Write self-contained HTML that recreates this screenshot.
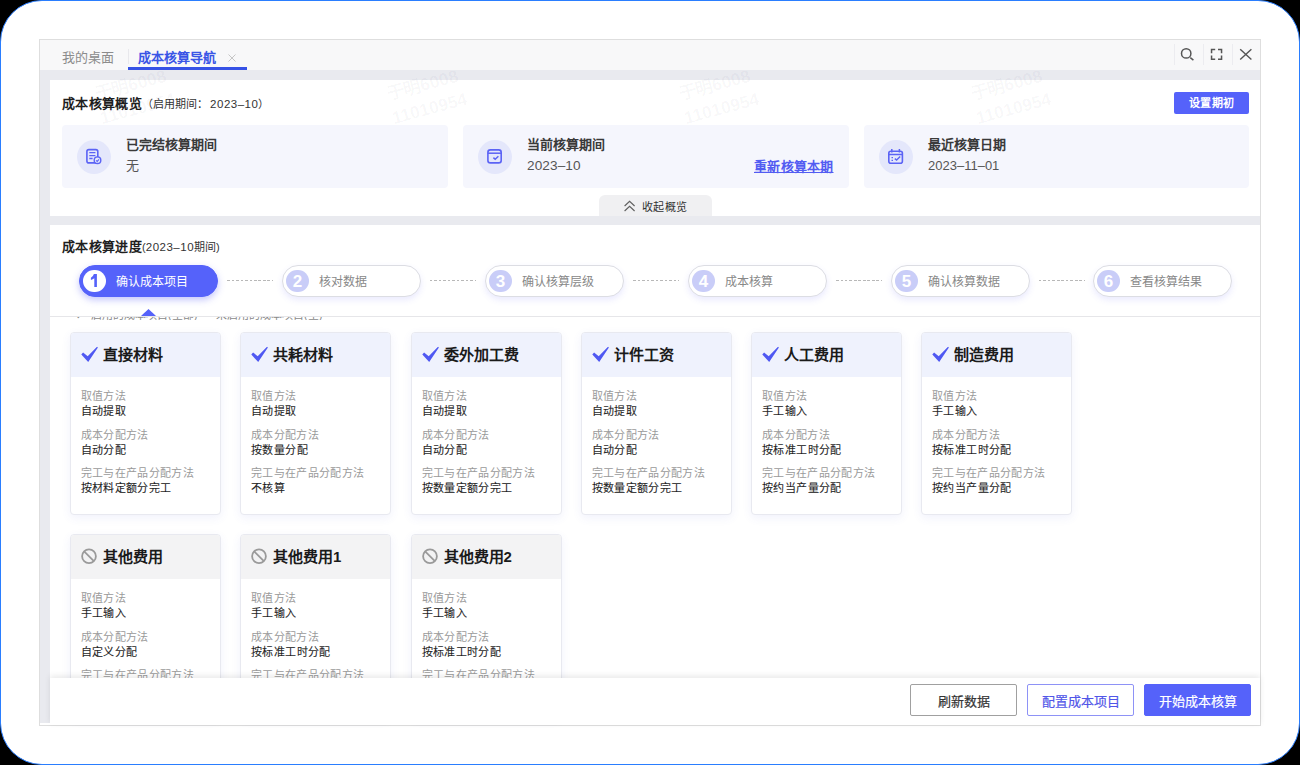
<!DOCTYPE html>
<html lang="zh-CN">
<head>
<meta charset="utf-8">
<style>
*{box-sizing:border-box;margin:0;padding:0}
html,body{width:1300px;height:765px;overflow:hidden;background:#000;font-family:"Liberation Sans",sans-serif;}
.a{position:absolute;white-space:nowrap}
.frame{position:absolute;left:0;top:0;width:1300px;height:765px;border-radius:42px;border:1.5px solid #2a7eff;background:#fff;overflow:hidden}
.win{position:absolute;left:39px;top:39px;width:1222px;height:687px;border:1px solid #dedede;background:#e9eaef}
.tabbar{position:absolute;left:40px;top:40px;width:1220px;height:30px;background:#f8f8f9}
.tab{font-size:13px;line-height:20px;color:#8c8c8c}
.isep{position:absolute;top:44px;width:1px;height:21px;background:#ececf0}
.panel{position:absolute;background:#fff}
.h1{font-size:13px;line-height:20px;font-weight:bold;color:#1f1f1f}
.h1 b{letter-spacing:0.35px}
.h1 small{font-size:11px;font-weight:normal;color:#333}
.h1 i{font-style:normal;letter-spacing:0.5px;font-size:11.5px}
.btn-s{position:absolute;left:1174px;top:92px;width:75px;height:22px;border-radius:2px;background:#5562fa;color:#fff;font-size:11px;font-weight:bold;text-align:center;line-height:22px;letter-spacing:0.5px;padding-left:0.5px}
.ocard{position:absolute;top:125px;height:63px;background:#f5f6fd;border-radius:4px}
.ocirc{position:absolute;left:15px;top:15px;width:34px;height:34px;border-radius:50%;background:#e4e7fb}
.ocirc svg{position:absolute;left:0;top:0}
.otitle{position:absolute;left:64px;top:9.6px;font-size:13px;line-height:20px;font-weight:bold;color:#3a3a3a;white-space:nowrap}
.oval{position:absolute;left:64px;top:31px;font-size:13px;line-height:20px;color:#555;white-space:nowrap}
.num2{letter-spacing:0.1px;font-size:13.6px}
.olink{position:absolute;top:32px;letter-spacing:0.25px;font-size:13px;line-height:20px;color:#525cf2;font-weight:bold;text-decoration:underline;white-space:nowrap}
.collapse{position:absolute;left:599px;top:195px;width:113px;height:21px;border-radius:6px 6px 0 0;background:#f0f0f2;font-size:11px;color:#333;line-height:21px}
.step{position:absolute;top:265px;width:139px;height:32px;border-radius:16px;background:#fff;border:1px solid #dcdde3;box-shadow:0 3px 6px rgba(90,95,245,0.13)}
.step .num{position:absolute;left:3.2px;top:3.7px;width:22.6px;height:22.6px;border-radius:50%;background:#c9cdf8;color:#fff;font-size:17px;font-weight:bold;text-align:center;line-height:23px}
.step .lbl{position:absolute;left:36px;top:5.7px;font-size:12px;line-height:20px;color:#888;white-space:nowrap}
.step.on{background:#5562fa;border-color:#5562fa;box-shadow:0 3px 7px rgba(90,95,245,0.35)}
.step.on .num{background:#fff;color:#5562fa}
.step.on .lbl{color:#fff}
.dash{position:absolute;top:280px;width:46px;height:1px;background:repeating-linear-gradient(90deg,#b8b8b8 0 2.5px,transparent 2.5px 4.5px)}
.card{position:absolute;width:151px;height:183px;border:1px solid #e8e9f0;border-radius:4px;background:#fff;box-shadow:0 3px 10px rgba(80,90,220,0.08);overflow:hidden}
.card .hd{position:absolute;left:0;top:0;right:0;height:44px;background:#eff2fd}
.card.off .hd{background:#f3f3f4}
.card .tt{position:absolute;left:32px;top:11px;font-size:15px;line-height:22px;font-weight:bold;color:#1a1a1a;white-space:nowrap}
.card svg{position:absolute}
.card .lb{position:absolute;left:10px;font-size:11px;letter-spacing:0.35px;line-height:15px;color:#9a9a9a;white-space:nowrap}
.card .vl{position:absolute;left:10px;font-size:11px;letter-spacing:0.4px;line-height:15px;color:#1f1f1f;white-space:nowrap;-webkit-text-stroke:0.1px #1f1f1f}
.fbtn{position:absolute;top:684px;width:107px;height:32px;border-radius:2px;font-size:13px;line-height:33px;text-align:center;-webkit-text-stroke:0.2px currentColor}
.wm{font-size:17.5px;line-height:20px;font-weight:bold;color:rgba(40,40,80,0.04);transform:rotate(-15deg);transform-origin:0 100%;pointer-events:none}
</style>
</head>
<body>
<div class="frame"></div>
<div class="win"></div>
<div class="tabbar"></div>
<div class="a tab" style="left:62px;top:47.5px">我的桌面</div>
<div class="a" style="left:128px;top:49px;width:1px;height:15px;background:#e8e8ec"></div>
<div class="a tab" style="left:138px;top:47.5px;color:#3a55e6;font-weight:bold">成本核算导航</div>
<svg class="a" style="left:228px;top:54px" width="8" height="8" viewBox="0 0 8 8"><path d="M0.5 0.5L7.5 7.5M7.5 0.5L0.5 7.5" stroke="#c6c6c6" stroke-width="1"/></svg>
<div class="a" style="left:128px;top:67px;width:119px;height:3px;background:#3652e6"></div>
<div class="isep" style="left:1174px"></div>
<div class="isep" style="left:1203px"></div>
<div class="isep" style="left:1232px"></div>
<svg class="a" style="left:1179px;top:46px" width="18" height="18" viewBox="0 0 18 18"><circle cx="7.2" cy="7.4" r="4.7" fill="none" stroke="#555" stroke-width="1.5"/><path d="M11.3 11.6L14.4 14.1" stroke="#555" stroke-width="1.5"/></svg>
<svg class="a" style="left:1209px;top:47px" width="16" height="16" viewBox="0 0 16 16"><path d="M2.55 6.2V2.55H6.2M9 2.55H12.55V6.2M12.55 8.6V12.15H9M6.2 12.15H2.55V8.6" fill="none" stroke="#555" stroke-width="1.5"/></svg>
<svg class="a" style="left:1238px;top:47px" width="16" height="16" viewBox="0 0 16 16"><path d="M2.2 2.2L13.4 12.5M13.4 2.2L2.2 12.5" fill="none" stroke="#555" stroke-width="1.4"/></svg>

<div class="panel" style="left:50px;top:80px;width:1210px;height:136px"></div>
<div class="a h1" style="left:62px;top:94px"><b>成本核算概览</b><small>（启用期间：<i style="margin-left:2px">2023–10</i>）</small></div>
<div class="btn-s">设置期初</div>

<div class="ocard" style="left:62px;width:386px">
 <div class="ocirc"><svg width="34" height="34" viewBox="0 0 34 34"><rect x="9.9" y="9.6" width="10.9" height="13.3" rx="2" fill="none" stroke="#5b63f5" stroke-width="1.6"/><path d="M12.3 12.7H18.4M12.3 15.6H18.4M12.3 18.5H15.6" stroke="#5b63f5" stroke-width="1.3"/><circle cx="20.5" cy="20.2" r="3.3" fill="#e4e7fb" stroke="#5b63f5" stroke-width="1.4"/><path d="M19 20.3L20.2 21.4L22 19.3" fill="none" stroke="#5b63f5" stroke-width="1.1"/></svg></div>
 <div class="otitle">已完结核算期间</div>
 <div class="oval">无</div>
</div>
<div class="ocard" style="left:463px;width:386px">
 <div class="ocirc"><svg width="34" height="34" viewBox="0 0 34 34"><rect x="9.9" y="9.9" width="13.3" height="13" rx="2.5" fill="none" stroke="#5b63f5" stroke-width="1.6"/><path d="M9.9 13.2H23.2" stroke="#5b63f5" stroke-width="1.5"/><path d="M15.4 17.6L17.2 19.3L20.4 16.2" fill="none" stroke="#5b63f5" stroke-width="1.5"/></svg></div>
 <div class="otitle">当前核算期间</div>
 <div class="oval num2">2023–10</div>
 <div class="olink" style="left:291px">重新核算本期</div>
</div>
<div class="ocard" style="left:864px;width:385px">
 <div class="ocirc"><svg width="34" height="34" viewBox="0 0 34 34"><rect x="9.8" y="11.2" width="13.6" height="12" rx="2" fill="none" stroke="#5b63f5" stroke-width="1.6"/><path d="M9.8 14.6H23.4M12.8 9V12.4M20.4 9V12.4" stroke="#5b63f5" stroke-width="1.5"/><path d="M12.5 17.6H14M12.5 20.4H14M15.8 18.6L17.6 20.1L21.2 16.6" fill="none" stroke="#5b63f5" stroke-width="1.4"/></svg></div>
 <div class="otitle">最近核算日期</div>
 <div class="oval">2023–11–01</div>
</div>
<div class="collapse"><svg class="a" style="left:25px;top:5px" width="12" height="12" viewBox="0 0 12 12"><path d="M0.6 6L5.6 1.3L10.6 6M0.6 11L5.6 6.3L10.6 11" fill="none" stroke="#606060" stroke-width="1.15"/></svg><span class="a" style="left:43px;top:1.5px;letter-spacing:0.3px">收起概览</span></div>

<div class="panel" style="left:50px;top:225px;width:1210px;height:500px"></div>
<div class="a h1" style="left:62px;top:237px"><b>成本核算进度</b><small>(<i>2023–10</i>期间)</small></div>

<div class="step on" style="left:79px"><div class="num"></div><svg class="a" style="left:-1px;top:-1px" width="40" height="32" viewBox="79 265 40 32"><path d="M93.9 274.1H96.9V286.9H94.3V278.3Q92.7 279.6 90.9 280.1V277.7Q93 277 93.9 274.1Z" fill="#5562fa"/></svg><div class="lbl">确认成本项目</div></div>
<div class="dash" style="left:227px"></div>
<div class="step" style="left:282px"><div class="num">2</div><div class="lbl">核对数据</div></div>
<div class="dash" style="left:430px"></div>
<div class="step" style="left:485px"><div class="num">3</div><div class="lbl">确认核算层级</div></div>
<div class="dash" style="left:633px"></div>
<div class="step" style="left:688px"><div class="num">4</div><div class="lbl">成本核算</div></div>
<div class="dash" style="left:836px"></div>
<div class="step" style="left:891px"><div class="num">5</div><div class="lbl">确认核算数据</div></div>
<div class="dash" style="left:1039px"></div>
<div class="step" style="left:1093px"><div class="num">6</div><div class="lbl">查看核算结果</div></div>

<svg class="a" style="left:141px;top:309px" width="15" height="7" viewBox="0 0 15 7"><path d="M0 7L7.5 0L15 7Z" fill="#5562fa"/></svg>
<div class="a" style="left:50px;top:316px;width:1210px;height:1px;background:#e6e6e9"></div>

<div class="a" style="left:50px;top:317px;width:400px;height:3px;overflow:hidden;color:#8a8a8a;font-size:11px;line-height:16px"><div class="a" style="left:26px;top:-11px">✓</div><div class="a" style="left:41px;top:-10.5px">启用的成本项目(全部)</div><div class="a" style="left:150px;top:-12px;width:12px;height:12px;border:1px solid #aaa;border-radius:50%"></div><div class="a" style="left:166px;top:-10.5px">未启用的成本项目(全)</div></div>
<!--CARDS-->
<div class="card" style="left:69.5px;top:332px"><div class="hd"></div><svg style="left:0;top:0" width="40" height="40" viewBox="0 0 40 40"><path d="M10.3 21.6L12.1 19.4L16.7 23.3L26 13.7L26.9 14.5L17.2 29.1Z" fill="#4f58f2"/></svg><div class="tt">直接材料</div><div class="lb" style="top:56px">取值方法</div><div class="vl" style="top:71px">自动提取</div><div class="lb" style="top:95px">成本分配方法</div><div class="vl" style="top:110px">自动分配</div><div class="lb" style="top:133px">完工与在产品分配方法</div><div class="vl" style="top:148px">按材料定额分完工</div></div>
<div class="card" style="left:240px;top:332px"><div class="hd"></div><svg style="left:0;top:0" width="40" height="40" viewBox="0 0 40 40"><path d="M10.3 21.6L12.1 19.4L16.7 23.3L26 13.7L26.9 14.5L17.2 29.1Z" fill="#4f58f2"/></svg><div class="tt">共耗材料</div><div class="lb" style="top:56px">取值方法</div><div class="vl" style="top:71px">自动提取</div><div class="lb" style="top:95px">成本分配方法</div><div class="vl" style="top:110px">按数量分配</div><div class="lb" style="top:133px">完工与在产品分配方法</div><div class="vl" style="top:148px">不核算</div></div>
<div class="card" style="left:410.5px;top:332px"><div class="hd"></div><svg style="left:0;top:0" width="40" height="40" viewBox="0 0 40 40"><path d="M10.3 21.6L12.1 19.4L16.7 23.3L26 13.7L26.9 14.5L17.2 29.1Z" fill="#4f58f2"/></svg><div class="tt">委外加工费</div><div class="lb" style="top:56px">取值方法</div><div class="vl" style="top:71px">自动提取</div><div class="lb" style="top:95px">成本分配方法</div><div class="vl" style="top:110px">自动分配</div><div class="lb" style="top:133px">完工与在产品分配方法</div><div class="vl" style="top:148px">按数量定额分完工</div></div>
<div class="card" style="left:580.5px;top:332px"><div class="hd"></div><svg style="left:0;top:0" width="40" height="40" viewBox="0 0 40 40"><path d="M10.3 21.6L12.1 19.4L16.7 23.3L26 13.7L26.9 14.5L17.2 29.1Z" fill="#4f58f2"/></svg><div class="tt">计件工资</div><div class="lb" style="top:56px">取值方法</div><div class="vl" style="top:71px">自动提取</div><div class="lb" style="top:95px">成本分配方法</div><div class="vl" style="top:110px">自动分配</div><div class="lb" style="top:133px">完工与在产品分配方法</div><div class="vl" style="top:148px">按数量定额分完工</div></div>
<div class="card" style="left:751px;top:332px"><div class="hd"></div><svg style="left:0;top:0" width="40" height="40" viewBox="0 0 40 40"><path d="M10.3 21.6L12.1 19.4L16.7 23.3L26 13.7L26.9 14.5L17.2 29.1Z" fill="#4f58f2"/></svg><div class="tt">人工费用</div><div class="lb" style="top:56px">取值方法</div><div class="vl" style="top:71px">手工输入</div><div class="lb" style="top:95px">成本分配方法</div><div class="vl" style="top:110px">按标准工时分配</div><div class="lb" style="top:133px">完工与在产品分配方法</div><div class="vl" style="top:148px">按约当产量分配</div></div>
<div class="card" style="left:921px;top:332px"><div class="hd"></div><svg style="left:0;top:0" width="40" height="40" viewBox="0 0 40 40"><path d="M10.3 21.6L12.1 19.4L16.7 23.3L26 13.7L26.9 14.5L17.2 29.1Z" fill="#4f58f2"/></svg><div class="tt">制造费用</div><div class="lb" style="top:56px">取值方法</div><div class="vl" style="top:71px">手工输入</div><div class="lb" style="top:95px">成本分配方法</div><div class="vl" style="top:110px">按标准工时分配</div><div class="lb" style="top:133px">完工与在产品分配方法</div><div class="vl" style="top:148px">按约当产量分配</div></div>
<div class="card off" style="left:69.5px;top:534px"><div class="hd"></div><svg style="left:0;top:0" width="40" height="40" viewBox="0 0 40 40"><circle cx="18" cy="21.3" r="6.9" fill="none" stroke="#9a9a9a" stroke-width="1.8"/><path d="M13.1 16.4L22.9 26.2" stroke="#9a9a9a" stroke-width="1.8"/></svg><div class="tt">其他费用</div><div class="lb" style="top:56px">取值方法</div><div class="vl" style="top:71px">手工输入</div><div class="lb" style="top:95px">成本分配方法</div><div class="vl" style="top:110px">自定义分配</div><div class="lb" style="top:133px">完工与在产品分配方法</div><div class="vl" style="top:148px">按约当产量分配</div></div>
<div class="card off" style="left:240px;top:534px"><div class="hd"></div><svg style="left:0;top:0" width="40" height="40" viewBox="0 0 40 40"><circle cx="18" cy="21.3" r="6.9" fill="none" stroke="#9a9a9a" stroke-width="1.8"/><path d="M13.1 16.4L22.9 26.2" stroke="#9a9a9a" stroke-width="1.8"/></svg><div class="tt">其他费用1</div><div class="lb" style="top:56px">取值方法</div><div class="vl" style="top:71px">手工输入</div><div class="lb" style="top:95px">成本分配方法</div><div class="vl" style="top:110px">按标准工时分配</div><div class="lb" style="top:133px">完工与在产品分配方法</div><div class="vl" style="top:148px">按约当产量分配</div></div>
<div class="card off" style="left:410.5px;top:534px"><div class="hd"></div><svg style="left:0;top:0" width="40" height="40" viewBox="0 0 40 40"><circle cx="18" cy="21.3" r="6.9" fill="none" stroke="#9a9a9a" stroke-width="1.8"/><path d="M13.1 16.4L22.9 26.2" stroke="#9a9a9a" stroke-width="1.8"/></svg><div class="tt">其他费用2</div><div class="lb" style="top:56px">取值方法</div><div class="vl" style="top:71px">手工输入</div><div class="lb" style="top:95px">成本分配方法</div><div class="vl" style="top:110px">按标准工时分配</div><div class="lb" style="top:133px">完工与在产品分配方法</div><div class="vl" style="top:148px">按约当产量分配</div></div>
<!--/CARDS-->

<div class="panel" style="left:50px;top:678px;width:1210px;height:47px;box-shadow:0 -2px 6px rgba(0,0,0,0.09)"></div>
<div class="a" style="left:40px;top:723px;width:12px;height:2px;background:#fff"></div>
<div class="fbtn" style="left:910px;border:1px solid #a0a0a0;color:#333;background:#fff">刷新数据</div>
<div class="fbtn" style="left:1027px;border:1px solid #8e92f6;color:#5156e8;background:#fff">配置成本项目</div>
<div class="fbtn" style="left:1144px;border:1px solid #5562fa;color:#fff;background:#5562fa">开始成本核算</div>
<div class="a wm" style="left:98px;top:84px">于明6008</div><div class="a wm" style="left:103px;top:108px">11010954</div>
<div class="a wm" style="left:390px;top:84px">于明6008</div><div class="a wm" style="left:395px;top:108px">11010954</div>
<div class="a wm" style="left:682px;top:84px">于明6008</div><div class="a wm" style="left:687px;top:108px">11010954</div>
<div class="a wm" style="left:974px;top:84px">于明6008</div><div class="a wm" style="left:979px;top:108px">11010954</div>
</body>
</html>
